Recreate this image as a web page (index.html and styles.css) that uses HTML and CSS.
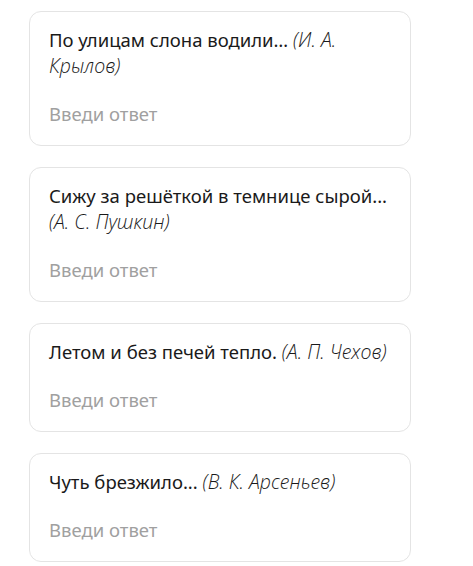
FILE: index.html
```html
<!DOCTYPE html>
<html lang="ru">
<head>
  <meta charset="UTF-8" />
  <title>Угадай автора</title>
  <link rel="stylesheet" href="styles.css">
</head>
<body>

  <div class="list">
    <div class="card">
      <p class="question">По улицам слона водили… <em>(И. А. Крылов)</em></p>
      <input class="answer" type="text" placeholder="Введи ответ" />
    </div>

    <div class="card">
      <p class="question">Сижу за решёткой в темнице сырой... <em>(А. С. Пушкин)</em></p>
      <input class="answer" type="text" placeholder="Введи ответ" />
    </div>

    <div class="card">
      <p class="question">Летом и без печей тепло. <em>(А. П. Чехов)</em></p>
      <input class="answer" type="text" placeholder="Введи ответ" />
    </div>

    <div class="card">
      <p class="question">Чуть брезжило... <em>(В. К. Арсеньев)</em></p>
      <input class="answer" type="text" placeholder="Введи ответ" />
    </div>
  </div>

</body>
</html>
```

FILE: styles.css
```css
body {
  margin: 0;
  font-family: "Noto Sans", "Open Sans", sans-serif;
  background: white;
  color: #1a1a1a;
}

.list {
  display: flex;
  flex-direction: column;
  gap: 21px;
  padding: 11px 62px 0 29px;
}

.card {
  border: 1px solid #e4e4e4;
  border-radius: 12px;
  padding: 15px 18px 18px 19px;
  background: white;
}

.question {
  margin: 0;
  font-size: 18.5px;
  line-height: 26px;
}

.question em {
  font-family: "Open Sans", sans-serif;
  font-weight: 350;
  font-size: 19.5px;
}

.answer {
  display: block;
  width: 100%;
  box-sizing: border-box;
  margin-top: 21px;
  padding: 0;
  height: 27px;
  border: none;
  outline: none;
  font-family: inherit;
  font-size: 18.5px;
  color: #1a1a1a;
  background: transparent;
}

.answer::placeholder {
  color: #a0a0a0;
}
```
